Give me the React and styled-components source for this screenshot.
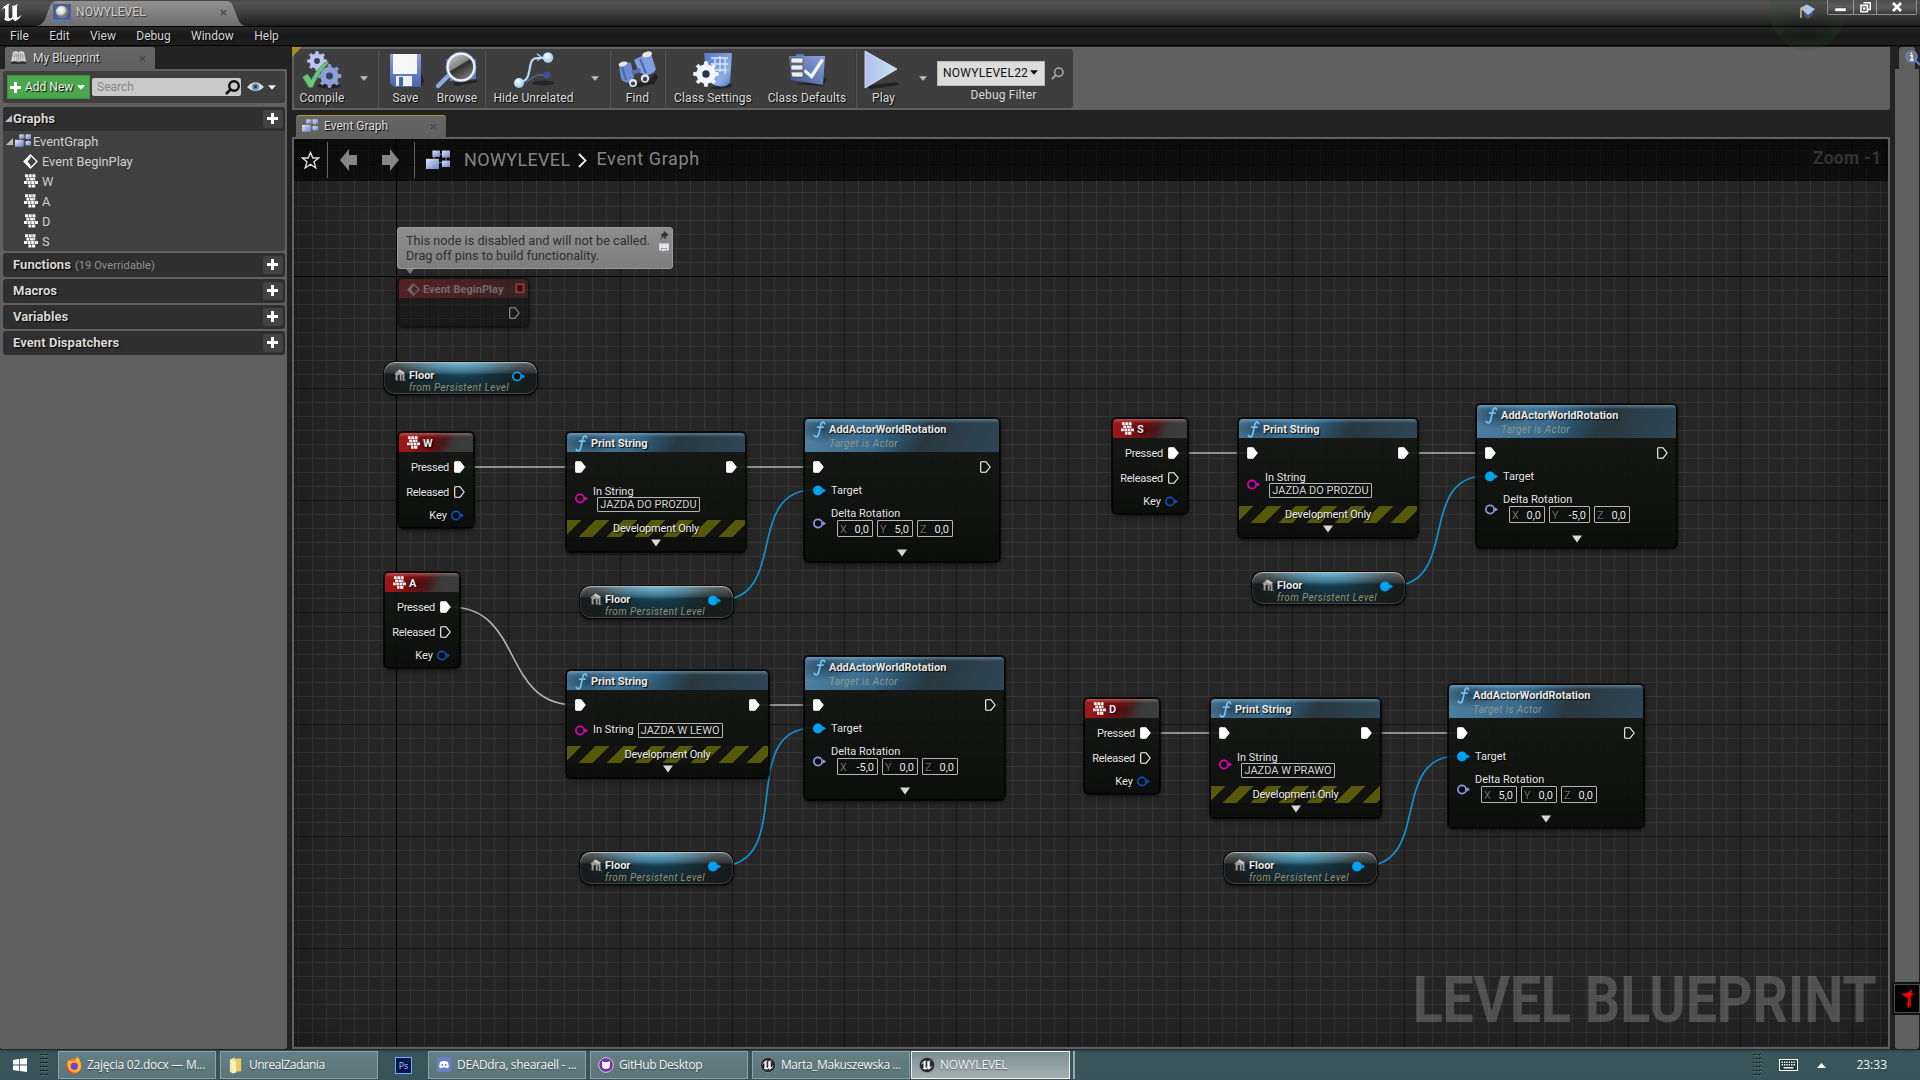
import React from "react";
import styled, { createGlobalStyle, css } from "styled-components";

const Global = createGlobalStyle`
  * { box-sizing: border-box; }
  html, body { margin: 0; padding: 0; background: #222; overflow: hidden; }
  body { font-family: Roboto, "Liberation Sans", sans-serif; font-size: 12px; color: #ddd; }
  svg { display: block; flex: none; }
`;

const raised = css`text-shadow: 1px 1px 1px #000;`;

const Screen = styled.div`
  width: 1920px; height: 1080px; display: flex; flex-direction: column;
  background: #222; overflow: hidden; white-space: nowrap;
`;

/* ---------- title bar and menu ---------- */
const TitleBar = styled.header`
  position: relative; height: 26px; flex: none; display: flex; align-items: flex-start;
  background: linear-gradient(#454545 0, #535353 2px, #474747 10px, #2b2b2b 20px, #1d1d1d 26px);
`;
const LogoSlot = styled.div`width: 36px; padding: 3px 0 0 1px;`;
const LevelTab = styled.div`
  width: 210px; height: 25px; margin-top: 1px; display: flex; align-items: center; padding: 0 0 3px 17px;
  background: linear-gradient(#919191, #6e6e6e);
  clip-path: path("M0 25 C6 24 8 21 10 16 L14 5 Q16 0 22 0 L190 0 Q195 0 197 5 L202 18 Q204 24 210 25 Z");
`;
const LevelTabText = styled.span`
  width: 144px; margin-left: 5px; color: #cfcfcf; letter-spacing: 0.1px; text-shadow: 1px 1px 1px #333;
`;
const TitleRight = styled.div`margin-left: auto; display: flex; align-items: flex-start; padding-right: 3px; z-index: 1;`;
const CapSlot = styled.div`padding: 4px 11px 0 0;`;
const PulseRing = styled.div`
  position: absolute; left: 1770px; top: -25px; width: 75px; height: 75px; border-radius: 50%; z-index: 1;
  background: radial-gradient(circle, rgba(0,30,0,0.05) 30%, rgba(35,85,35,0.3) 100%); pointer-events: none;
`;
const WindowButtons = styled.div`
  display: flex; height: 15px; border: 1px solid #8d8d8d; border-top: 0; border-radius: 0 0 2px 2px;
`;
const WindowButton = styled.div`
  width: ${(p) => p.$w}px; display: flex; align-items: center; justify-content: center;
  background: linear-gradient(#4c4c4c, #5c5c5c 50%, #3a3a3a);
  & + & { border-left: 1px solid #9a9a9a; }
`;
const MenuBar = styled.nav`
  height: 20px; flex: none; display: flex; align-items: center; gap: 20.4px; padding-left: 10px;
  border-top: 1px solid #000; border-bottom: 1px solid #000;
  background: linear-gradient(#262626, #181818 50%, #1f1f1f);
`;
const MenuItem = styled.span`color: #d5d5d5; ${raised}`;

/* ---------- workspace ---------- */
const Workspace = styled.main`height: 1004px; flex: none; display: flex; padding-top: 1px;`;
const Sidebar = styled.aside`width: 287px; height: 1002px; display: flex; flex-direction: column; flex: none;`;
const DockTab = styled.div`
  width: 150px; height: 22px; margin-left: ${(p) => p.$left}px; flex: none; display: flex; align-items: center;
  padding: 0 0 1px ${(p) => p.$pad}px; gap: ${(p) => p.$gap || 7}px; color: #dcdcdc; background: linear-gradient(#666, #606060);
  border-radius: 3px 3px 0 0; border-top: 1px solid ${(p) => (p.$active ? "#b09a2c" : "#696969")};
  ${raised}
`;
const TabClose = styled.div`margin: 0 9px 0 auto;`;
const SidePanel = styled.div`
  flex: 1; background: #606060; padding: 2px 2px 0 3px; display: flex; flex-direction: column;
  border-radius: 0 0 2px 2px;
`;
const SearchStrip = styled.div`
  height: 32px; margin-bottom: 4px; background: #3e3e3e; border-radius: 3px; display: flex; align-items: center;
  padding: 0 8px 0 4px;
`;
const AddNew = styled.div`
  width: 83px; height: 24px; background: #4ba64e; border: 1px solid #3f9443; display: flex; align-items: center;
  padding-left: 2px; gap: 4px; color: #e9f3e9; ${raised}
`;
const SearchField = styled.div`
  width: 149px; height: 18px; margin: 0 6px 0 2px; background: #c9c9c9; color: #8a8a8a; border-radius: 2px;
  display: flex; align-items: center; justify-content: space-between; padding: 0 1px 0 5px;
`;
const EyeSlot = styled.div`display: flex; align-items: center; gap: 4px;`;
const Section = styled.div`margin-bottom: 2px; background: #404040; border-radius: 3px; overflow: hidden;`;
const SectionHead = styled.div`
  height: 24px; display: flex; align-items: center; background: #2f2f2f; padding: 0 2px 2px 0;
`;
const Fold = styled.div`width: 10px; display: flex; justify-content: center;`;
const SectionName = styled.span`font-size: 13px; font-weight: 700; color: #d8d8d8; letter-spacing: 0.05px; ${raised}`;
const SectionNote = styled.span`font-size: 11px; color: #929292; margin: 2px 0 0 4px; letter-spacing: 0.1px;`;
const PlusButton = styled.div`
  width: 20px; height: 18px; margin: 2px 0 0 auto; padding: 0 1px 1px 0; background: #434343; border-radius: 2px; display: flex;
  align-items: center; justify-content: center;
`;
const TreeRow = styled.div`
  height: 20px; display: flex; align-items: center; gap: ${(p) => p.$gap || 4}px; padding-left: ${(p) => p.$indent}px;
  font-size: 12.8px; color: #cfcfcf;
`;

const Center = styled.section`
  width: 1598px; height: 1002px; margin-left: 5px; display: flex; flex-direction: column; flex: none;
`;
const ToolbarFrame = styled.div`
  position: relative; height: 63px; flex: none; padding: 2px; background: #606060; border-radius: 0 0 3px 0; display: flex;
`;
const CornerMark = styled.div`
  position: absolute; left: 0; top: 0; width: 10px; height: 10px; background: #a98a2a;
  clip-path: polygon(0 0, 100% 0, 0 100%);
`;
const Toolbar = styled.div`
  width: 779px; height: 59px; background: #3e3e3e; border-radius: 0 3px 3px 0; display: flex; align-items: center;
`;
const Tool = styled.div`
  width: ${(p) => p.$w}px; height: 59px; display: flex; flex-direction: column; align-items: center;
  justify-content: flex-end; padding-bottom: 2px; color: #dcdcdc; letter-spacing: 0.1px; ${raised}
`;
const ToolLabel = styled.span`line-height: 16px;`;
const ToolArrow = styled.div`width: ${(p) => p.$w}px; display: flex; justify-content: center;`;
const Rule = styled.div`
  width: 2px; height: 58px; margin-left: ${(p) => p.$ml || 0}px; background: linear-gradient(90deg, #2c2c2c, #626262);
`;
const DebugBox = styled.div`display: flex; flex-direction: column; width: 132px; height: 59px; padding: 12px 0 0 1px;`;
const DebugRow = styled.div`display: flex; align-items: center; gap: 6px;`;
const Combo = styled.div`
  width: 108px; height: 25px; background: #dcdcdc; color: #111; display: flex; align-items: center;
  padding: 0 0 2px 5px; gap: 2px; letter-spacing: 0.25px; border: 1px solid #b9b9b9;
`;
const DebugLabel = styled.span`margin-top: 1px; line-height: 16px; text-align: center; color: #d6d6d6; letter-spacing: 0.15px; padding-left: 2px;`;
const TabStrip = styled.div`height: 27px; flex: none; display: flex; align-items: flex-end;`;

/* ---------- graph ---------- */
const Graph = styled.div`
  position: relative; flex: 1; border: 2px solid #606060; overflow: hidden;
  background-color: #262626;
  background-image:
    linear-gradient(#000, #000), linear-gradient(#000, #000),
    linear-gradient(90deg, #161616 1px, transparent 1px), linear-gradient(#161616 1px, transparent 1px),
    linear-gradient(90deg, #353535 1px, transparent 1px), linear-gradient(#353535 1px, transparent 1px);
  background-size: 1px 100%, 100% 1px, 112px 112px, 112px 112px, 14px 14px, 14px 14px;
  background-position: 102px 0, 0 137px, 102px 0, 0 25px, 4px 0, 0 11px;
  background-repeat: no-repeat, no-repeat, repeat, repeat, repeat, repeat;
`;
const Vignette = styled.div`
  position: absolute; inset: 0; box-shadow: inset 0 0 60px rgba(0,0,0,0.4);
`;
const Crumbs = styled.div`
  position: relative; height: 42px; background: rgba(0,0,0,0.6); display: flex; align-items: center;
  color: #858585; font-size: 18px; letter-spacing: 0.3px;
`;
const StarSlot = styled.div`width: 33px; display: flex; justify-content: center;`;
const CrumbRule = styled.div`width: 1px; height: 36px; background: #666;`;
const Arrows = styled.div`width: 86px; display: flex; justify-content: space-between; padding: 0 15px 0 12px;`;
const CrumbIcon = styled.div`padding: 0 14px 0 11px;`;
const CrumbText = styled.span`line-height: 20px; padding-bottom: ${(p) => p.$lift}px; letter-spacing: ${(p) => p.$ls}px;`;
const CrumbSep = styled.div`padding: 0 9px 0 8px;`;
const ZoomText = styled.span`
  margin-left: auto; margin-right: 7px; padding-bottom: 6px; font-weight: 700; font-size: 19px; color: #333; transform: scaleX(0.92);
  transform-origin: right;
`;
const Watermark = styled.div`
  position: absolute; right: 11px; bottom: 9px; font-size: 65px; line-height: 76px; font-weight: 700; color: rgba(255,255,255,0.2);
  transform: scaleX(0.852); transform-origin: right;
`;
const Wires = styled.svg`position: absolute; left: 0; top: 0;`;

const Node = styled.div`
  position: absolute; left: ${(p) => p.$x - 294}px; top: ${(p) => p.$y - 139}px; width: ${(p) => p.$w}px;
  height: ${(p) => p.$h}px; border-radius: 5px; display: flex; flex-direction: column; overflow: hidden;
  background: linear-gradient(rgba(22,24,22,0.88), rgba(10,12,10,0.93));
  box-shadow: inset 0 0 0 1px rgba(0,0,0,0.75), 0 0 1px 1px rgba(0,0,0,0.7), 0 2px 5px rgba(0,0,0,0.6);
  font-size: 11px; color: #e6e6e6; opacity: ${(p) => (p.$faded ? 0.55 : 1)};
`;
const heads = {
  blue: "linear-gradient(rgba(150,200,230,.45), rgba(255,255,255,0) 4px), radial-gradient(ellipse 32px 14px at 20px 10px, rgba(20,40,55,.6), transparent), linear-gradient(115deg, #4f82a3 0%, #3a6a8b 38%, #2a4e66 50%, #29373f 62%, #2e4757 100%)",
  red: "linear-gradient(rgba(230,170,170,.4), rgba(255,255,255,0) 4px), radial-gradient(ellipse 24px 12px at 30px 11px, rgba(50,0,0,.6), transparent), linear-gradient(115deg, #a3171a 0%, #8a1517 42%, #4f2122 58%, #3a3a3a 72%, #3d3d3d 100%)",
  dullRed: "linear-gradient(100deg, #7c1d1f, #641c1e 60%, #3a2424)",
};
const NodeHead = styled.div`
  height: ${(p) => p.$h}px; margin: 1px 1px 0; flex: none; display: flex; padding: 0 4px 0 ${(p) => p.$pad || 8}px; gap: 4px;
  border-radius: 4px 4px 0 0; background: ${(p) => heads[p.$tone]};
`;
const HeadText = styled.div`display: flex; flex-direction: column; padding-top: 3px;`;
const HeadIcon = styled.div`padding-top: ${(p) => p.$top}px; width: ${(p) => p.$w}px;`;
const NodeTitle = styled.span`font-weight: 700; line-height: 15px; color: #e8e8e8; ${raised}`;
const NodeSub = styled.span`
  font-size: 10px; font-style: italic; line-height: 13px; letter-spacing: 0.4px; color: ${(p) => p.$color || "#8a9a88"};
`;
const PinRow = styled.div`
  height: ${(p) => p.$h}px; margin-top: ${(p) => p.$mt || 0}px; flex: none; display: flex; align-items: center;
  justify-content: ${(p) => p.$justify || "flex-start"}; gap: ${(p) => p.$gap || 0}px;
  padding: 0 ${(p) => p.$right || 0}px 0 9px; text-shadow: 1px 1px 1px #000; letter-spacing: ${(p) => p.$ls || 0}px;
`;
const PinDrop = styled.div`margin-top: ${(p) => p.$mt}px;`;
const Stack = styled.div`display: flex; flex-direction: column;`;
const PinLabel = styled.span`display: block; height: ${(p) => p.$h || 14}px; line-height: ${(p) => p.$lh || 14}px;`;
const TextField = styled.div`
  height: 15px; width: ${(p) => p.$w}px; margin-left: ${(p) => p.$ml}px; border: 1px solid #b5b5b5; border-radius: 1px;
  display: flex; align-items: center; justify-content: center; color: #d5d5d5;
`;
const VectorRow = styled.div`display: flex; gap: 4px; margin-left: 6px;`;
const Axis = styled.div`
  height: 17px; width: ${(p) => p.$w}px; border: 1px solid #b5b5b5; border-radius: 1px; display: flex; align-items: center;
  justify-content: space-between; padding: 1px 3px 0 2px; color: #e8e8e8;
`;
const AxisName = styled.span`color: #6d6d6d;`;
const Hazard = styled.div`
  height: 17px; margin: 3px 1px 0; flex: none; display: flex; align-items: center; justify-content: center; color: #eee;
  background: repeating-linear-gradient(135deg, #56590b 0, #56590b 9.9px, #12130f 9.9px, #12130f 19.8px);
  text-shadow: 1px 1px 1px #000; letter-spacing: -0.15px;
`;
const Expand = styled.div`
  display: flex; justify-content: center; margin-top: ${(p) => p.$mt}px;
`;
const FloorCard = styled.div`
  position: absolute; left: ${(p) => p.$x - 294}px; top: ${(p) => p.$y - 139}px; width: 153px; height: 32px;
  border-radius: 11px; display: flex; padding: 0 14px 0 10px; gap: 2px;
  background:
    linear-gradient(rgba(255,255,255,.32), rgba(255,255,255,.1) 11px, transparent 12px),
    radial-gradient(ellipse 62px 15px at 76px 0, rgba(60,170,215,.9), transparent),
    radial-gradient(ellipse 70px 30px at 76px 10px, rgba(20,80,108,.7), transparent), #171b1b;
  box-shadow: inset 0 1px 1px #b4bfc2, inset 0 -1px 1px #4a4a4a, 0 0 1px 1px rgba(0,0,0,.8), 0 2px 4px rgba(0,0,0,.7);
`;
const FloorText = styled.div`display: flex; flex-direction: column; padding-top: 6px; font-size: 11px;`;
const FloorSub = styled(NodeSub)`margin-top: -2px;`;
const FloorIconSlot = styled.div`padding-top: 7px;`;
const FloorPin = styled.div`margin: 9px -3px 0 auto;`;

const Bubble = styled.div`
  position: absolute; left: 103px; top: 88px; width: 276px; height: 42px; border-radius: 3px; padding: 5px 3px 0 8px;
  background: linear-gradient(rgba(150,150,150,.93), rgba(132,132,132,.93)); border: 1px solid #9b9b9b; color: #2f2f2f;
  font-size: 12.7px; line-height: 15px; display: flex; justify-content: space-between;
  &::after {
    content: ""; position: absolute; left: 8px; top: 41px; border: 4px solid transparent; border-top: 5px solid #777; border-bottom: 0;
  }
`;
const BubbleText = styled.div`white-space: pre;`;
const BubbleIcons = styled.div`display: flex; flex-direction: column; gap: 2px; margin-top: -2px;`;
const BeginTitle = styled.span`flex: 1; font-weight: 700; color: #a8a0a0; line-height: 22px; margin-left: -1px; letter-spacing: 0.05px;`;

/* ---------- right dock ---------- */
const RightDock = styled.aside`
  width: 25px; height: 1002px; margin-left: 5px; display: flex; flex-direction: column; position: relative;
`;
const RightTab = styled.div`width: 16px; height: 22px; margin-left: 4px; background: #606060; border-radius: 3px 3px 0 0; padding: 3px 0 0 6px;`;
const RightPanel = styled.div`width: 24px; flex: 1; background: #606060; border-radius: 0 0 3px 3px;`;
const Badge = styled.div`
  position: absolute; left: -3px; top: 935px; width: 30px; height: 33px; background: #020202; border: 2px solid #111;
  box-shadow: inset 0 0 0 1px #4d4d4d; display: flex; align-items: center; justify-content: center; padding-left: 2px;
`;

/* ---------- taskbar ---------- */
const Taskbar = styled.footer`
  height: 30px; flex: none; display: flex; align-items: center; background: linear-gradient(#2c474b, #3a565b 3px, #38535a);
  font-family: "Open Sans", "Noto Sans", sans-serif; font-size: 12px; color: #f2f6f6;
`;
const Start = styled.div`width: 40px; padding-left: 13px;`;
const Task = styled.div`
  width: ${(p) => p.$w || 158}px; height: 28px; margin-left: ${(p) => p.$ml}px; flex: none; display: flex; align-items: center;
  gap: 5px; padding-left: 7px; letter-spacing: ${(p) => p.$ls || 0}px;
  border: 1px solid ${(p) => (p.$active ? "#f0f4f4" : "#8ea2a5")};
  background: ${(p) => (p.$active ? "linear-gradient(#7d8f93, #a4b0b0)" : "linear-gradient(#657f84, #5c757a)")};
  text-shadow: 0 1px 1px rgba(0,0,0,.4);
`;
const TaskText = styled.span`padding-bottom: 1px;`;
const Loose = styled.div`margin-left: 17px;`;
const EndMark = styled.div`width: 2px; height: 28px; margin-left: 3px; background: #93a6a8;`;
const Tray = styled.div`margin-left: auto; display: flex; align-items: center; padding-right: 33px;`;
const TrayGap = styled.div`width: ${(p) => p.$w}px;`;

/* ---------- drawings ---------- */
const Down = ({ w = 8, h, c = "#bdbdbd" }) => (
  <svg width={w} height={h || w / 2 + 1} viewBox="0 0 8 5" preserveAspectRatio="none"><path d="M0 0.3H8L4 4.7Z" fill={c} /></svg>
);
const Cross = ({ c = "#444" }) => (
  <svg width="7" height="7" viewBox="0 0 7 7"><path d="M0.8 0.8L6.2 6.2M6.2 0.8L0.8 6.2" stroke={c} strokeWidth="1.2" /></svg>
);
const Plus = ({ s = 11 }) => (
  <svg width={s} height={s} viewBox="0 0 11 11"><path d="M5.5 0V11M0 5.5H11" stroke="#fff" strokeWidth="3" /></svg>
);
const unrealMark = "M0 9C2 4 5 1.5 9.5 0.6C8.4 1.7 8 2.6 8 4.2V14.2C8 15.6 8.8 16.4 9.8 16.2C10.9 16 11.6 15.2 12 14.4V4.4C12 3.6 11.6 3.3 10.8 3.2C13.8 2.8 16.5 1.8 18.3 0.4C17.2 1.7 16.8 2.6 16.8 4V13.6C16.8 14.6 17.5 15.1 18.4 14.8C19.8 14.3 21 13 21.8 11.7C20.6 15.4 18 17.8 14.8 19.2L12.2 16.6C11 18.4 9.2 19 7 19C4.8 18.8 3.4 17.7 3 16.6C4 16.7 4.3 16 4.3 15V7C4.3 5.6 3.8 5.2 2.8 5.6C1.7 6.2 0.7 7.6 0 9Z";
const Unreal = ({ s = 20 }) => (
  <svg width={s * 1.15} height={s} viewBox="0 0 23 20"><path fill="#fff" d={unrealMark} /></svg>
);
const UnrealRound = () => (
  <svg width="16" height="16" viewBox="0 0 16 16">
    <circle cx="8" cy="8" r="7.6" fill="#25282a" stroke="#8d9698" strokeWidth="0.7" />
    <path transform="translate(2.6 3.2) scale(.48)" fill="#fff" stroke="#fff" strokeWidth="0.6" d={unrealMark} />
  </svg>
);
const Defs = () => (
  <svg width="0" height="0" style={{ position: "absolute" }}>
    <defs>
      <linearGradient id="peri" x1="0" y1="0" x2="1" y2="1"><stop offset="0" stopColor="#dbe6ff" /><stop offset="1" stopColor="#6f83bd" /></linearGradient>
      <linearGradient id="floppy" x1="0" y1="0" x2="0" y2="1"><stop offset="0" stopColor="#86a0de" /><stop offset="1" stopColor="#4a64ae" /></linearGradient>
      <linearGradient id="playg" x1="0" y1="0" x2="1" y2="0"><stop offset="0" stopColor="#b3bff0" /><stop offset="1" stopColor="#c3e4e8" /></linearGradient>
      <linearGradient id="lens" x1="0" y1="0" x2="0.6" y2="1"><stop offset="0" stopColor="#d8d8d8" /><stop offset="0.5" stopColor="#858585" /><stop offset="0.55" stopColor="#2e2e2e" /><stop offset="1" stopColor="#777" /></linearGradient>
      <radialGradient id="ball" cx="0.4" cy="0.35"><stop offset="0" stopColor="#fff" /><stop offset="0.6" stopColor="#ddd" /><stop offset="1" stopColor="#777" /></radialGradient>
      <radialGradient id="ballBlue" cx="0.4" cy="0.35"><stop offset="0" stopColor="#fff" /><stop offset="1" stopColor="#a9d2ef" /></radialGradient>
      <linearGradient id="sheet" x1="0" y1="0" x2="1" y2="1"><stop offset="0" stopColor="#5675c5" /><stop offset="0.7" stopColor="#8fb0e4" /><stop offset="1" stopColor="#4a68b4" /></linearGradient>
      <linearGradient id="board" x1="0" y1="1" x2="1" y2="0"><stop offset="0" stopColor="#3f528e" /><stop offset="1" stopColor="#8ca6dc" /></linearGradient>
    </defs>
  </svg>
);
const GraphGlyph = ({ w = 17 }) => (
  <svg width={w} height={w * 0.82} viewBox="0 0 24 19.6">
    <path d="M10 5L18 4M12 13L18 12M8 9V6M20 6V12" stroke="#9aa6cf" strokeWidth="0.8" />
    <rect x="6.4" y="0.5" width="7.6" height="6.4" fill="url(#peri)" />
    <rect x="16" y="0.5" width="8" height="7" fill="url(#peri)" />
    <rect x="0" y="8.8" width="13" height="10.2" fill="url(#peri)" />
    <rect x="16" y="10.6" width="8" height="6.4" fill="url(#peri)" />
  </svg>
);
const KeysGlyph = ({ w = 14 }) => (
  <svg width={w} height={w} viewBox="0 0 14 14">
    <g fill="#f4f4f4">
      <path d="M1 0.2h3v3h-3zM4.7 0.2h3v3h-3zM8.4 0.2h3v3h-3zM2.4 3.8h3v2.6h-3zM6.1 3.8h3v2.6h-3zM9.4 3.8h1.8v2.6h-1.8zM0 7.1h3v2.8h-3zM3.6 7.1h3v2.8h-3zM7.2 7.1h3v2.8h-3zM10.8 7.1h3.2v2.8h-3.2zM4.4 10.6h2.6v3h-2.6zM7.6 10.6h3.6v3h-3.6z" />
    </g>
  </svg>
);
const EventGlyph = ({ s = 15, c = "#fff" }) => (
  <svg width={s} height={s} viewBox="0 0 15 15">
    <path d="M7.5 1L14 7.5L7.5 14L1 7.5Z" fill="none" stroke={c} strokeWidth="1.3" />
    <path d="M7.5 1L1 7.5L7.5 14V11L4.6 7.5L7.5 4Z" fill={c} />
  </svg>
);
const BookGlyph = () => (
  <svg width="15" height="14" viewBox="0 0 15 14">
    <path d="M2 1Q5 -0.4 7.5 1Q10 -0.4 13 1L15 11Q11 9.5 7.5 11Q4 9.5 0 11Z" fill="#d9d9d9" />
    <path d="M7.5 1V11M4 2L3 9M11 2L12 9M5.7 2V9.4M9.3 2V9.4M1.5 5H13.6" stroke="#8d8d8d" strokeWidth="0.7" fill="none" />
    <path d="M0 11Q4 9.5 7.5 11.3Q11 9.5 15 11V13H0Z" fill="#333" />
  </svg>
);
const ExecPin = ({ on, c = "#fff" }) => (
  <svg width="11" height="12" viewBox="0 0 11 12">
    <path d="M1.5 0.7H5.8L10.2 6L5.8 11.3H1.5Q0.7 11.3 0.7 10.5V1.5Q0.7 0.7 1.5 0.7Z" fill={on ? c : "none"} stroke={c} strokeWidth="1.1" strokeLinejoin="round" />
  </svg>
);
const DataPin = ({ c, on }) => (
  <svg width="14" height="11" viewBox="0 0 14 11">
    <path d="M9.8 3.3L13 5.5L9.8 7.7Z" fill={c} />
    <circle cx="5" cy="5.5" r="4.1" fill={on ? c : "#0b0d0d"} stroke={c} strokeWidth="1.7" />
  </svg>
);
const FuncGlyph = () => (
  <svg width="13" height="17" viewBox="0 0 13 17">
    <path d="M11.6 2.6Q11.2 0.9 9.6 1.2Q8.2 1.5 7.6 4.6L5.8 12.6Q5.1 15.8 3.2 15.9Q1.6 15.9 1.4 14.4M4.6 6.2H10" fill="none" stroke="#74c2f2" strokeWidth="1.7" strokeLinecap="round" />
  </svg>
);
const HouseGlyph = () => (
  <svg width="13" height="13" viewBox="0 0 13 13">
    <path d="M0.5 4.5L5.5 0.5L10.5 3.5V12H8.6V6.4L7.6 5.6V11.5H5.8V5.6L3.6 6.6V11.5H1.6V6Z" fill="#a09a97" />
    <path d="M5.5 0.5L10.5 3.5L8.8 5L3.5 2.6Z" fill="#cbc6c3" /><path d="M10.5 11.2H12V12H10.5Z" fill="#777" />
  </svg>
);
const gearPath = (cx, cy, r, n) => {
  const pts = [];
  for (let i = 0; i < n; i++) {
    const a = (i / n) * Math.PI * 2;
    [[-0.3, 0.76], [-0.18, 1], [0.18, 1], [0.3, 0.76]].forEach(([d, k]) => {
      const t = a + (d * Math.PI * 1.6) / n;
      pts.push(`${(cx + Math.cos(t) * r * k).toFixed(2)} ${(cy + Math.sin(t) * r * k).toFixed(2)}`);
    });
  }
  return `M${pts.join("L")}Z`;
};
const Gear = ({ cx, cy, r, n = 8, fill, hole = "#26344f" }) => (
  <g><path d={gearPath(cx, cy, r, n)} fill={fill} stroke={fill} strokeWidth="0.8" /><circle cx={cx} cy={cy} r={r * 0.3} fill={hole} /></g>
);
const CompileIcon = () => (
  <svg width="42" height="40" viewBox="0 0 42 40">
    <ellipse cx="28" cy="36" rx="12" ry="2.5" fill="#222" />
    <Gear cx={16} cy={11} r={9.6} fill="#b9c5ea" hole="#34425f" />
    <Gear cx={28.5} cy={26} r={11.6} fill="#8d9fd6" hole="#34425f" />
    <path d="M1.5 27L6.5 24L10.5 29.5Q16 18 26.5 11L27.5 13Q18 22 11.5 37.5H8Z" fill="#6cc47d" stroke="#3d8d4d" strokeWidth="0.7" />
  </svg>
);
const SaveIcon = () => (
  <svg width="36" height="40" viewBox="0 0 36 40">
    <path d="M4 36L33 37L36 31L32 20Z" fill="#222" />
    <path d="M2 4H33V37H6L2 33Z" fill="url(#floppy)" />
    <rect x="5" y="4" width="24" height="20" fill="#f7f7f7" />
    <rect x="8" y="26" width="16" height="10" fill="#eef1f8" /><rect x="11" y="27" width="4" height="9" fill="#4964ad" />
  </svg>
);
const BrowseIcon = () => (
  <svg width="42" height="40" viewBox="0 0 42 40">
    <path d="M10 9H40V29L14 31Z" fill="#5d79bd" /><path d="M16 33L40 30L42 32L20 36Z" fill="#222" />
    <path d="M13 25L2 36" stroke="#8fa8e4" strokeWidth="4.5" strokeLinecap="round" />
    <circle cx="25" cy="17" r="13.5" fill="url(#lens)" stroke="#f0f4ff" strokeWidth="2.6" />
    <circle cx="25" cy="17" r="15" fill="none" stroke="#7b93cf" strokeWidth="0.7" />
  </svg>
);
const HideIcon = () => (
  <svg width="42" height="40" viewBox="0 0 42 40">
    <ellipse cx="30" cy="33" rx="11" ry="2.5" fill="#252525" />
    <path d="M7 32C18 33 17 26 26 25H32" fill="none" stroke="#4c5f86" strokeWidth="2" /><circle cx="34" cy="25" r="3.6" fill="#3b5590" />
    <path d="M6 32C22 32 12 8 24 8H30" fill="none" stroke="#b7d9f0" strokeWidth="2.2" />
    <path d="M24 4L29 7.5L24 10.5" fill="none" stroke="#b7d9f0" strokeWidth="1.4" />
    <circle cx="6" cy="33" r="5" fill="url(#ballBlue)" /><circle cx="35" cy="7.5" r="5.2" fill="url(#ballBlue)" />
  </svg>
);
const FindIcon = () => (
  <svg width="40" height="40" viewBox="0 0 40 40">
    <path d="M8 34L30 31L38 23L40 27L36 34L16 38Z" fill="#222" />
    <path d="M1 15Q6 11 13 13L16 27L13 32Q7 34 3 29Z" fill="#6c8bd2" />
    <path d="M16 10Q24 5 33 4L38 19Q35 25 27 25L21 22Z" fill="#7f9de0" />
    <path d="M4 17L8 30M22 9L28 23" stroke="#4a66ac" strokeWidth="2" />
    <path d="M13 21L22 18L23 22L15 25Z" fill="#5670b4" />
    <ellipse cx="5" cy="14" rx="4.4" ry="2.3" transform="rotate(-15 5 14)" fill="#e3e6ea" />
    <ellipse cx="29" cy="4.4" rx="5" ry="2.8" transform="rotate(-15 29 4)" fill="#e6e6e6" />
    <circle cx="15" cy="33" r="4" fill="#e2e6ee" /><circle cx="15" cy="33.5" r="2.1" fill="#3a3f50" />
    <circle cx="27" cy="28.5" r="4.2" fill="#e2e6ee" /><circle cx="27" cy="29" r="2.2" fill="#3a3f50" />
  </svg>
);
const SettingsIcon = () => (
  <svg width="40" height="40" viewBox="0 0 40 40">
    <path d="M16 38L37 33L39 37L24 39Z" fill="#222" />
    <path d="M11 3H39L37 33Q32 38 25 36Q17 34 14 30Z" fill="url(#sheet)" />
    <path d="M18 8H35M18 14H35M20 20H34M22 8V14M27 6V22M32 8V24" stroke="#dbe8fb" strokeWidth="1.3" />
    <Gear cx={13} cy={24} r={12.4} fill="#f3f8fa" />
  </svg>
);
const DefaultsIcon = () => (
  <svg width="40" height="40" viewBox="0 0 40 40">
    <path d="M8 34L36 36L40 28Z" fill="#222" />
    <path d="M9 7V4H17V7Z" fill="#5c76bd" /><path d="M2 6H38L36 35L4 30Z" fill="url(#board)" />
    <path d="M4 8H16V13H4ZM4 15H16V20H4ZM4 22H16V27H5Z" fill="#f1f1f1" stroke="#333" strokeWidth="0.6" />
    <path d="M18 19L24 24L34 9L37 10L25 29L17 22Z" fill="#f4f6fb" />
  </svg>
);
const PlayIcon = () => (
  <svg width="42" height="40" viewBox="0 0 42 40">
    <path d="M2 36L34 32L36 35L8 39Z" fill="#222" /><path d="M2 1L34 19L2 38Z" fill="url(#playg)" stroke="#e9eefc" strokeWidth="0.8" />
  </svg>
);
const NavArrow = ({ flip }) => (
  <svg width="17" height="22" viewBox="0 0 17 22">
    <path transform={flip ? "translate(17 0) scale(-1 1)" : undefined} d="M0 11L9 0V6H17V16H9V22Z" fill="#858787" />
  </svg>
);
const Magnifier = ({ s = 15, c = "#111", w = 2.4 }) => (
  <svg width={s} height={s} viewBox="0 0 15 15"><circle cx="9" cy="6" r="4.8" fill="none" stroke={c} strokeWidth={w} /><path d="M5.5 9.5L1 14" stroke={c} strokeWidth={w + 0.2} /></svg>
);
const Dots = ({ w = 8 }) => (
  <svg width={w} height="22" viewBox="0 0 8 22">
    {[0, 3, 6].map((x) => [0, 4, 8, 12, 16, 20].map((y) => (
      <g key={`${x}-${y}`}><rect x={x} y={y} width="2" height="1" fill="#101b1e" /><rect x={x + 1} y={y + 1} width="1" height="1" fill="#6d8589" /></g>
    )))}
  </svg>
);

/* ---------- graph nodes ---------- */
const KeyNode = ({ x, y, name }) => (
  <Node $x={x} $y={y} $w={76} $h={96}>
    <NodeHead $h={19} $tone="red"><HeadIcon $top={3} $w={12}><KeysGlyph w={13} /></HeadIcon><HeadText><NodeTitle>{name}</NodeTitle></HeadText></NodeHead>
    <PinRow $h={24} $mt={3} $justify="flex-end" $gap={5} $right={9} $ls={-0.25}>Pressed<ExecPin on /></PinRow>
    <PinRow $h={26} $justify="flex-end" $gap={5} $right={9} $ls={-0.25}>Released<ExecPin /></PinRow>
    <PinRow $h={20} $justify="flex-end" $gap={4} $right={9}>Key<DataPin c="#0d4fb3" /></PinRow>
  </Node>
);
const PrintNode = ({ x, y, w, text, fieldW, inline }) => (
  <Node $x={x} $y={y} $w={w} $h={inline ? 108 : 120}>
    <NodeHead $h={19} $tone="blue"><HeadIcon $top={2} $w={12}><FuncGlyph /></HeadIcon><HeadText><NodeTitle>Print String</NodeTitle></HeadText></NodeHead>
    <PinRow $h={24} $mt={3} $justify="space-between" $right={9}><ExecPin on /><ExecPin on /></PinRow>
    {inline ? (
      <PinRow $h={26} $gap={4}><DataPin c="#e300b5" /><PinLabel>In String</PinLabel><TextField $w={fieldW} $ml={0}>{text}</TextField></PinRow>
    ) : (
      <PinRow $h={38} $gap={4}>
        <DataPin c="#e300b5" />
        <Stack><PinLabel $h={13} $lh={15}>In String</PinLabel><TextField $w={fieldW} $ml={4}>{text}</TextField></Stack>
      </PinRow>
    )}
    <Hazard>Development Only</Hazard>
    <Expand $mt={2}><Down w={10} h={8} c="#d8d8d8" /></Expand>
  </Node>
);
const RotationNode = ({ x, y, w, values }) => (
  <Node $x={x} $y={y} $w={w} $h={144}>
    <NodeHead $h={33} $tone="blue">
      <HeadIcon $top={2} $w={12}><FuncGlyph /></HeadIcon>
      <HeadText><NodeTitle>AddActorWorldRotation</NodeTitle><NodeSub>Target is Actor</NodeSub></HeadText>
    </NodeHead>
    <PinRow $h={24} $mt={3} $justify="space-between" $right={9}><ExecPin on /><ExecPin /></PinRow>
    <PinRow $h={22} $gap={4}><DataPin c="#00a2f0" on />Target</PinRow>
    <PinRow $h={41} $gap={4}>
      <PinDrop $mt={3}><DataPin c="#8e9be0" /></PinDrop>
      <Stack>
        <PinLabel $h={14} $lh={16}>Delta Rotation</PinLabel>
        <VectorRow>
          {["X", "Y", "Z"].map((axis, i) => (
            <Axis key={axis} $w={values[i].startsWith("-") ? 41 : 36}><AxisName>{axis}</AxisName>{values[i]}</Axis>
          ))}
        </VectorRow>
      </Stack>
    </PinRow>
    <Expand $mt={7}><Down w={10} h={8} c="#d8d8d8" /></Expand>
  </Node>
);
const FloorNode = ({ x, y, linked }) => (
  <FloorCard $x={x} $y={y}>
    <FloorIconSlot><HouseGlyph /></FloorIconSlot>
    <FloorText><NodeTitle>Floor</NodeTitle><FloorSub $color="#8f916f">from Persistent Level</FloorSub></FloorText>
    <FloorPin><DataPin c="#00a2f0" on={linked} /></FloorPin>
  </FloorCard>
);

const wires = [
  { a: [464, 467], b: [575, 467] }, { a: [736, 467], b: [813, 467] },
  { a: [450, 607], b: [575, 705] }, { a: [759, 705], b: [813, 705] },
  { a: [1178, 453], b: [1247, 453] }, { a: [1408, 453], b: [1485, 453] },
  { a: [1150, 733], b: [1219, 733] }, { a: [1371, 733], b: [1457, 733] },
  { a: [720, 600], b: [813, 490], data: true }, { a: [720, 866], b: [813, 728], data: true },
  { a: [1392, 586], b: [1485, 476], data: true }, { a: [1364, 866], b: [1457, 756], data: true },
];
const wirePath = ({ a, b }) => {
  const [x1, y1, x2, y2] = [a[0] - 294, a[1] - 139, b[0] - 294, b[1] - 139];
  const t = (Math.abs(x2 - x1) + Math.abs(y2 - y1)) / 3;
  return `M${x1} ${y1}C${x1 + t} ${y1} ${x2 - t} ${y2} ${x2} ${y2}`;
};

const SectionBar = ({ name, note, open }) => (
  <SectionHead>
    <Fold>{open && <svg width="7" height="7" viewBox="0 0 7 7"><path d="M7 0V7H0Z" fill="#bbb" /></svg>}</Fold>
    <SectionName>{name}</SectionName>{note && <SectionNote>{note}</SectionNote>}
    <PlusButton><Plus /></PlusButton>
  </SectionHead>
);

export default function App() {
  return (
    <Screen>
      <Global /><Defs />
      <TitleBar>
        <LogoSlot><Unreal s={19} /></LogoSlot>
        <LevelTab>
          <svg width="18" height="17" viewBox="0 0 18 17"><rect width="18" height="17" fill="#4a5f8f" /><rect y="15.5" width="18" height="1.5" fill="#3f7fe0" /><circle cx="9" cy="8" r="6.3" fill="url(#ball)" /></svg>
          <LevelTabText>NOWYLEVEL</LevelTabText><Cross />
        </LevelTab>
        <PulseRing />
        <TitleRight>
          <CapSlot>
            <svg width="17" height="17" viewBox="0 0 17 17"><path d="M5 7V12L9 15L14 11V6Z" fill="#44597a" /><path d="M1 4L8 0.5L16 5L9 11Z" fill="#a9c7ee" /><path d="M8 4L2 5V14" stroke="#d8b07c" strokeWidth="1.5" fill="none" /></svg>
          </CapSlot>
          <WindowButtons>
            <WindowButton $w={25}><svg width="11" height="9" viewBox="0 0 11 9"><rect y="5" width="11" height="3.4" fill="#fff" stroke="#222" strokeWidth="0.4" /></svg></WindowButton>
            <WindowButton $w={23}><svg width="11" height="11" viewBox="0 0 11 11"><path d="M3.5 0.7H10.3V7.5H8M1 3.4H7.4V9.8H1Z" fill="none" stroke="#fff" strokeWidth="1.6" /><rect x="3" y="5.4" width="2.4" height="2.4" fill="#fff" /></svg></WindowButton>
            <WindowButton $w={40}><svg width="10" height="10" viewBox="0 0 10 10"><path d="M1 1L9 9M9 1L1 9" stroke="#fff" strokeWidth="2.6" /></svg></WindowButton>
          </WindowButtons>
        </TitleRight>
      </TitleBar>
      <MenuBar>{["File", "Edit", "View", "Debug", "Window", "Help"].map((m) => <MenuItem key={m}>{m}</MenuItem>)}</MenuBar>

      <Workspace>
        <Sidebar>
          <DockTab $left={5} $pad={6}><BookGlyph />My Blueprint<TabClose><Cross /></TabClose></DockTab>
          <SidePanel>
            <SearchStrip>
              <AddNew><Plus /><span>Add New</span><Down w={8} c="#fff" /></AddNew>
              <SearchField>Search<Magnifier /></SearchField>
              <EyeSlot>
                <svg width="17" height="10" viewBox="0 0 17 10"><path d="M0 5Q8.5 -4.5 17 5Q8.5 13 0 5Z" fill="#dcdcdc" /><circle cx="8.5" cy="4.8" r="3.6" fill="#6f8fb8" /><circle cx="8.5" cy="4.6" r="1.6" fill="#26354d" /></svg>
                <Down w={8} c="#f2f2f2" />
              </EyeSlot>
            </SearchStrip>
            <Section>
              <SectionBar name="Graphs" open />
              <TreeRow $indent={3} $gap={2}>
                <svg width="7" height="7" viewBox="0 0 7 7"><path d="M7 0V7H0Z" fill="#bbb" /></svg>
                <GraphGlyph w={16} />EventGraph
              </TreeRow>
              <TreeRow $indent={20}><EventGlyph />Event BeginPlay</TreeRow>
              {["W", "A", "D", "S"].map((k) => <TreeRow key={k} $indent={21}><KeysGlyph />{k}</TreeRow>)}
            </Section>
            <Section><SectionBar name="Functions" note="(19 Overridable)" /></Section>
            <Section><SectionBar name="Macros" /></Section>
            <Section><SectionBar name="Variables" /></Section>
            <Section><SectionBar name="Event Dispatchers" /></Section>
          </SidePanel>
        </Sidebar>

        <Center>
          <ToolbarFrame>
            <Toolbar>
              <Tool $w={56}><CompileIcon /><ToolLabel>Compile</ToolLabel></Tool>
              <ToolArrow $w={27}><Down /></ToolArrow><Rule />
              <Tool $w={53}><SaveIcon /><ToolLabel>Save</ToolLabel></Tool>
              <Tool $w={50}><BrowseIcon /><ToolLabel>Browse</ToolLabel></Tool>
              <Rule $ml={2} />
              <Tool $w={95}><HideIcon /><ToolLabel>Hide Unrelated</ToolLabel></Tool>
              <ToolArrow $w={28}><Down /></ToolArrow><Rule />
              <Tool $w={53}><FindIcon /><ToolLabel>Find</ToolLabel></Tool>
              <Rule />
              <Tool $w={94}><SettingsIcon /><ToolLabel>Class Settings</ToolLabel></Tool>
              <Tool $w={94}><DefaultsIcon /><ToolLabel>Class Defaults</ToolLabel></Tool>
              <Rule $ml={1} />
              <Tool $w={53}><PlayIcon /><ToolLabel>Play</ToolLabel></Tool>
              <ToolArrow $w={26}><Down /></ToolArrow>
              <DebugBox>
                <DebugRow><Combo>NOWYLEVEL22<Down w={8} c="#111" /></Combo><Magnifier s={13} c="#aaa" w={1.8} /></DebugRow>
                <DebugLabel>Debug Filter</DebugLabel>
              </DebugBox>
            </Toolbar>
            <CornerMark />
          </ToolbarFrame>
          <TabStrip><DockTab $left={4} $pad={6} $gap={6} $active><GraphGlyph w={16} />Event Graph<TabClose><Cross /></TabClose></DockTab></TabStrip>
          <Graph>
            <Vignette />
            <Crumbs>
              <StarSlot><svg width="19" height="19" viewBox="0 0 19 19"><path d="M9.5 1.5L11.8 7H17.7L13 10.8L14.8 17L9.5 13.3L4.2 17L6 10.8L1.3 7H7.2Z" fill="none" stroke="#e4e4e4" strokeWidth="1.3" /></svg></StarSlot>
              <CrumbRule />
              <Arrows><NavArrow /><NavArrow flip /></Arrows>
              <CrumbRule />
              <CrumbIcon><GraphGlyph w={24} /></CrumbIcon>
              <CrumbText $lift={1} $ls={0.35}>NOWYLEVEL</CrumbText>
              <CrumbSep><svg width="9" height="15" viewBox="0 0 9 15"><path d="M1 1L7.5 7.5L1 14" fill="none" stroke="#f2f2f2" strokeWidth="1.8" /></svg></CrumbSep>
              <CrumbText $lift={2} $ls={0.65}>Event Graph</CrumbText>
              <ZoomText>Zoom -1</ZoomText>
            </Crumbs>
            <Watermark>LEVEL BLUEPRINT</Watermark>
            <Wires width="1594" height="908" viewBox="0 0 1594 908">
              {wires.map((w, i) => (
                <path key={i} d={wirePath(w)} fill="none" stroke={w.data ? "#1192d2" : "#b3b3b3"} strokeWidth={w.data ? 1.7 : 1.6} />
              ))}
            </Wires>
            <Bubble>
              <BubbleText>{"This node is disabled and will not be called.\nDrag off pins to build functionality."}</BubbleText>
              <BubbleIcons>
                <svg width="10" height="10" viewBox="0 0 10 10"><path d="M5 0L10 4L8.5 4.5L7 6L7 8.5L4 6L0.5 9.5L3 5L1.5 3L4 3Z" fill="#333" /></svg>
                <svg width="10" height="9" viewBox="0 0 10 9"><path d="M0 0.5H10V7.5H5L4 9L3.5 7.5H0Z" fill="#dfe3e8" /><path d="M2 5.5h1.2M4.4 5.5h1.2M6.8 5.5h1.2" stroke="#666" strokeWidth="1.2" /></svg>
              </BubbleIcons>
            </Bubble>
            <Node $x={398} $y={278} $w={131} $h={49} $faded>
              <NodeHead $h={19} $tone="dullRed">
                <HeadIcon $top={4} $w={13}><EventGlyph s={13} c="#a89c9c" /></HeadIcon>
                <BeginTitle>Event BeginPlay</BeginTitle>
                <HeadIcon $top={4} $w={9}><svg width="10" height="11" viewBox="0 0 10 11"><rect x="1.3" y="1.3" width="7.2" height="8" fill="#200" stroke="#ff3b3b" strokeWidth="2" /></svg></HeadIcon>
              </NodeHead>
              <PinRow $h={28} $mt={1} $justify="flex-end" $right={9}><ExecPin /></PinRow>
            </Node>
            <FloorNode x={384} y={362} />
            <KeyNode x={398} y={432} name="W" />
            <PrintNode x={566} y={432} w={180} text="JAZDA DO PROZDU" fieldW={103} />
            <RotationNode x={804} y={418} w={196} values={["0,0", "5,0", "0,0"]} />
            <FloorNode x={580} y={586} linked />
            <KeyNode x={384} y={572} name="A" />
            <PrintNode x={566} y={670} w={203} text="JAZDA W LEWO" fieldW={85} inline />
            <RotationNode x={804} y={656} w={201} values={["-5,0", "0,0", "0,0"]} />
            <FloorNode x={580} y={852} linked />
            <KeyNode x={1112} y={418} name="S" />
            <PrintNode x={1238} y={418} w={180} text="JAZDA DO PROZDU" fieldW={103} />
            <RotationNode x={1476} y={404} w={201} values={["0,0", "-5,0", "0,0"]} />
            <FloorNode x={1252} y={572} linked />
            <KeyNode x={1084} y={698} name="D" />
            <PrintNode x={1210} y={698} w={171} text="JAZDA W PRAWO" fieldW={94} />
            <RotationNode x={1448} y={684} w={196} values={["5,0", "0,0", "0,0"]} />
            <FloorNode x={1224} y={852} linked />
          </Graph>
        </Center>

        <RightDock>
          <RightTab><svg width="15" height="16" viewBox="0 0 15 16"><circle cx="6.5" cy="6.5" r="5.6" fill="#777" stroke="#5d83d8" strokeWidth="1.4" /><path d="M10.5 10.5L15 15" stroke="#5d83d8" strokeWidth="2" /><path d="M5 5.5H7V10M4.8 10H8.6M5.6 3.2H7.2" stroke="#fff" strokeWidth="1.5" fill="none" /></svg></RightTab>
          <RightPanel />
          <Badge><svg width="14" height="20" viewBox="0 0 14 20"><path d="M0.5 4.5L6 4L9.5 1L11 0.5L10.5 3.5L12.5 5L9.5 8L10 17L6.5 19.5L6.8 9L3 7Z" fill="#f00000" /></svg></Badge>
        </RightDock>
      </Workspace>

      <Taskbar>
        <Start><svg width="14" height="14" viewBox="0 0 14 14"><path d="M0 2L6 1.1V6.6H0ZM6.8 1L14 0V6.6H6.8ZM0 7.4H6V12.9L0 12ZM6.8 7.4H14V14L6.8 13Z" fill="#fff" /></svg></Start>
        <Dots />
        <Task $ml={10} $ls={-0.26}>
          <svg width="16" height="17" viewBox="0 0 16 17"><circle cx="8" cy="9" r="7.4" fill="#ff7a1a" /><path d="M2 3Q1 8 3 12Q8 18 14 13Q16 9 14 4Q13 0 10 0Q11 3 8 4Q4 5 2 3Z" fill="#ffb92e" /><path d="M1 5Q0 14 8 16.5Q1 17 0.6 9Z" fill="#e8294e" /><circle cx="8.3" cy="9.3" r="3.7" fill="#7a3fd0" /></svg>
          <TaskText>Zajęcia 02.docx — M...</TaskText>
        </Task>
        <Task $ml={4} $ls={-0.5}>
          <svg width="16" height="17" viewBox="0 0 17 17"><path d="M2 2L7 0V15L2 16Z" fill="#f7e9a2" /><path d="M6 1H14V15H7Z" fill="#e8cb66" /><path d="M4 3H8L9 16L4 17Z" fill="#fbf2bd" /></svg>
          <TaskText>UnrealZadania</TaskText>
        </Task>
        <Loose><svg width="17" height="17" viewBox="0 0 17 17"><rect x="0.5" y="0.5" width="16" height="16" fill="#0a1250" stroke="#6cb6f5" /><text x="8.5" y="12" textAnchor="middle" fontSize="9" fill="#9fd0ff" fontFamily="Open Sans">Ps</text></svg></Loose>
        <Task $ml={16} $ls={-0.33}>
          <svg width="16" height="16" viewBox="0 0 16 16"><rect x="1" y="0" width="14" height="15" rx="2" fill="#6a7fc8" /><path d="M4 5Q8 3 12 5L13 10Q11 12 10 10.5H6Q5 12 3 10Z" fill="#fff" /><circle cx="6.3" cy="8" r="1" fill="#6a7fc8" /><circle cx="9.7" cy="8" r="1" fill="#6a7fc8" /></svg>
          <TaskText>DEADdra, shearaell - ...</TaskText>
        </Task>
        <Task $ml={4} $ls={-0.42}>
          <svg width="16" height="16" viewBox="0 0 16 16"><circle cx="8" cy="8" r="7.3" fill="#74319c" stroke="#d9c6e4" strokeWidth="1" /><path d="M4 4L6 5H10L12 4V9Q12 12 8 12Q4 12 4 9Z" fill="#f6f0f8" /></svg>
          <TaskText>GitHub Desktop</TaskText>
        </Task>
        <Task $ml={4} $ls={-0.42}><UnrealRound /><TaskText>Marta_Makuszewska ...</TaskText></Task>
        <Task $ml={1} $w={159} $ls={-0.2} $active><UnrealRound /><TaskText>NOWYLEVEL</TaskText></Task>
        <EndMark />
        <Tray>
          <Dots /><TrayGap $w={18} />
          <svg width="19" height="12" viewBox="0 0 19 12"><rect x="0.5" y="0.5" width="18" height="11" fill="#22373b" stroke="#fff" /><path d="M2.5 3.2H17M2.5 5.7H17" stroke="#fff" strokeWidth="1.4" strokeDasharray="1.4 1" /><path d="M4.5 8.8H14.5" stroke="#fff" strokeWidth="1.4" /></svg>
          <TrayGap $w={19} />
          <svg width="9" height="5" viewBox="0 0 9 5"><path d="M4.5 0L9 5H0Z" fill="#fff" /></svg>
          <TrayGap $w={30} />
          <TaskText>23:33</TaskText>
        </Tray>
      </Taskbar>
    </Screen>
  );
}
